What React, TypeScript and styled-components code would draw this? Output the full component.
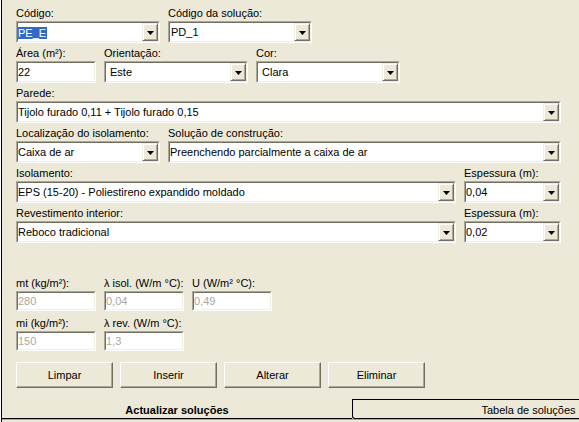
import styled, { createGlobalStyle } from 'styled-components';

const GlobalStyle = createGlobalStyle`
  html, body {
    margin: 0;
    padding: 0;
    background: #ece9d8;
  }
  body {
    font-family: 'Liberation Sans', Arial, sans-serif;
    font-size: 11px;
    color: #000;
  }
`;

const Window = styled.div`
  width: 579px;
  height: 422px;
  overflow: hidden;
  background: #ece9d8;
  border-left: 1px solid #fff;
  box-sizing: border-box;
`;

const TabPanel = styled.div`
  border-left: 1px solid #000;
  height: 100%;
  box-sizing: border-box;
`;

const Form = styled.div`
  padding: 7px 0 0 14px;
  display: flex;
  flex-direction: column;
  gap: 4px;
`;

const Row = styled.div<{ $top?: number }>`
  display: flex;
  gap: 8px;
  margin-top: ${(p) => p.$top ?? 0}px;
`;

const Field = styled.div<{ $w: number }>`
  display: flex;
  flex-direction: column;
  width: ${(p) => p.$w}px;
`;

const Label = styled.label`
  height: 13px;
  line-height: 13px;
  margin-bottom: 1px;
  white-space: nowrap;
`;

const Sunken = styled.div<{ $h?: number }>`
  height: ${(p) => p.$h ?? 22}px;
  box-sizing: border-box;
  border: 1px solid;
  border-color: #aca899 #fff #fff #aca899;
  background: #fff;
  display: flex;
`;

const Inner = styled.div<{ $pad?: number; $disabled?: boolean }>`
  flex: 1;
  display: flex;
  align-items: stretch;
  border: 1px solid;
  border-color: #716f64 #f1efe2 #f1efe2 #716f64;
  padding-left: ${(p) => p.$pad ?? 0}px;
  color: ${(p) => (p.$disabled ? '#aca899' : '#000')};
  overflow: hidden;
  white-space: nowrap;
`;

const Value = styled.span`
  flex: 1;
  display: flex;
  align-items: center;
`;

const Selected = styled.span`
  display: flex;
  align-items: center;
  background: #316ac5;
  color: #fff;
  margin: 1px 0 0 -1px;
  padding: 0 1px;
`;

const ArrowButton = styled.div`
  width: 16px;
  box-sizing: border-box;
  background: #ece9d8;
  border: 1px solid;
  border-color: #f1efe2 #716f64 #716f64 #f1efe2;
  box-shadow: inset 1px 1px 0 #fff, inset -1px -1px 0 #aca899;
  display: flex;
  align-items: center;
  justify-content: center;
  padding-top: 1px;
`;

const ButtonRow = styled.div`
  display: flex;
  gap: 7px;
  margin-top: 7px;
`;

const Button = styled.button`
  width: 97px;
  height: 26px;
  box-sizing: border-box;
  font-family: 'Liberation Sans', Arial, sans-serif;
  font-size: 11px;
  color: #000;
  background: #ece9d8;
  border: 1px solid;
  border-color: #fff #716f64 #716f64 #fff;
  box-shadow: inset -1px -1px 0 #aca899;
  padding: 0;
`;

const TabStrip = styled.div`
  display: flex;
  height: 20px;
  margin-top: 11px;
  box-shadow: 0 1px 0 #aca899;
`;

const Tab = styled.div<{ $active?: boolean }>`
  flex: none;
  width: ${(p) => (p.$active ? 350 : 352)}px;
  box-sizing: border-box;
  display: flex;
  align-items: center;
  justify-content: center;
  font-weight: ${(p) => (p.$active ? 700 : 400)};
  padding-top: ${(p) => (p.$active ? 3 : 1)}px;
  border-bottom: 1px solid #000;
  border-top: ${(p) => (p.$active ? 'none' : '1px solid #000')};
  border-left: ${(p) => (p.$active ? 'none' : '1px solid #000')};
  border-bottom-left-radius: ${(p) => (p.$active ? 0 : 3)}px;
`;

function Arrow() {
  return (
    <svg width="7" height="4" viewBox="0 0 7 4">
      <polygon points="0,0 7,0 3.5,4" fill="#000" />
    </svg>
  );
}

function Combo({ w, value, pad, selected }: { w: number; value: string; pad?: number; selected?: boolean }) {
  return (
    <Sunken style={{ width: w }}>
      <Inner $pad={pad}>
        <Value>{selected ? <Selected>{value}</Selected> : value}</Value>
        <ArrowButton>
          <Arrow />
        </ArrowButton>
      </Inner>
    </Sunken>
  );
}

function ComboField({ label, w, value, pad, selected }: { label: string; w: number; value: string; pad?: number; selected?: boolean }) {
  return (
    <Field $w={w}>
      <Label>{label}</Label>
      <Combo w={w} value={value} pad={pad} selected={selected} />
    </Field>
  );
}

function TextField({ label, value, disabled }: { label: string; value: string; disabled?: boolean }) {
  return (
    <Field $w={80}>
      <Label>{label}</Label>
      <Sunken $h={disabled ? 20 : 22}>
        <Inner $pad={0} $disabled={disabled}>
          <Value>{value}</Value>
        </Inner>
      </Sunken>
    </Field>
  );
}

export default function App() {
  return (
    <Window>
      <GlobalStyle />
      <TabPanel>
        <Form>
          <Row>
            <ComboField label="Código:" w={144} value="PE_E" selected />
            <ComboField label="Código da solução:" w={144} value="PD_1" pad={1} />
          </Row>
          <Row>
            <TextField label="Área (m²):" value="22" />
            <ComboField label="Orientação:" w={144} value="Este" pad={4} />
            <ComboField label="Cor:" w={144} value="Clara" pad={4} />
          </Row>
          <Row>
            <ComboField label="Parede:" w={545} value="Tijolo furado 0,11 + Tijolo furado 0,15" />
          </Row>
          <Row>
            <ComboField label="Localização do isolamento:" w={144} value="Caixa de ar" />
            <ComboField label="Solução de construção:" w={393} value="Preenchendo parcialmente a caixa de ar" />
          </Row>
          <Row>
            <ComboField label="Isolamento:" w={440} value="EPS (15-20) - Poliestireno expandido moldado" />
            <ComboField label="Espessura (m):" w={97} value="0,04" />
          </Row>
          <Row>
            <ComboField label="Revestimento interior:" w={440} value="Reboco tradicional" />
            <ComboField label="Espessura (m):" w={97} value="0,02" />
          </Row>
          <Row $top={30}>
            <TextField label="mt (kg/m²):" value="280" disabled />
            <TextField label="λ isol. (W/m °C):" value="0,04" disabled />
            <TextField label="U (W/m² °C):" value="0,49" disabled />
          </Row>
          <Row $top={2}>
            <TextField label="mi (kg/m²):" value="150" disabled />
            <TextField label="λ rev. (W/m °C):" value="1,3" disabled />
          </Row>
          <ButtonRow>
            <Button>Limpar</Button>
            <Button>Inserir</Button>
            <Button>Alterar</Button>
            <Button>Eliminar</Button>
          </ButtonRow>
        </Form>
        <TabStrip>
          <Tab $active>Actualizar soluções</Tab>
          <Tab>Tabela de soluções</Tab>
        </TabStrip>
      </TabPanel>
    </Window>
  );
}
